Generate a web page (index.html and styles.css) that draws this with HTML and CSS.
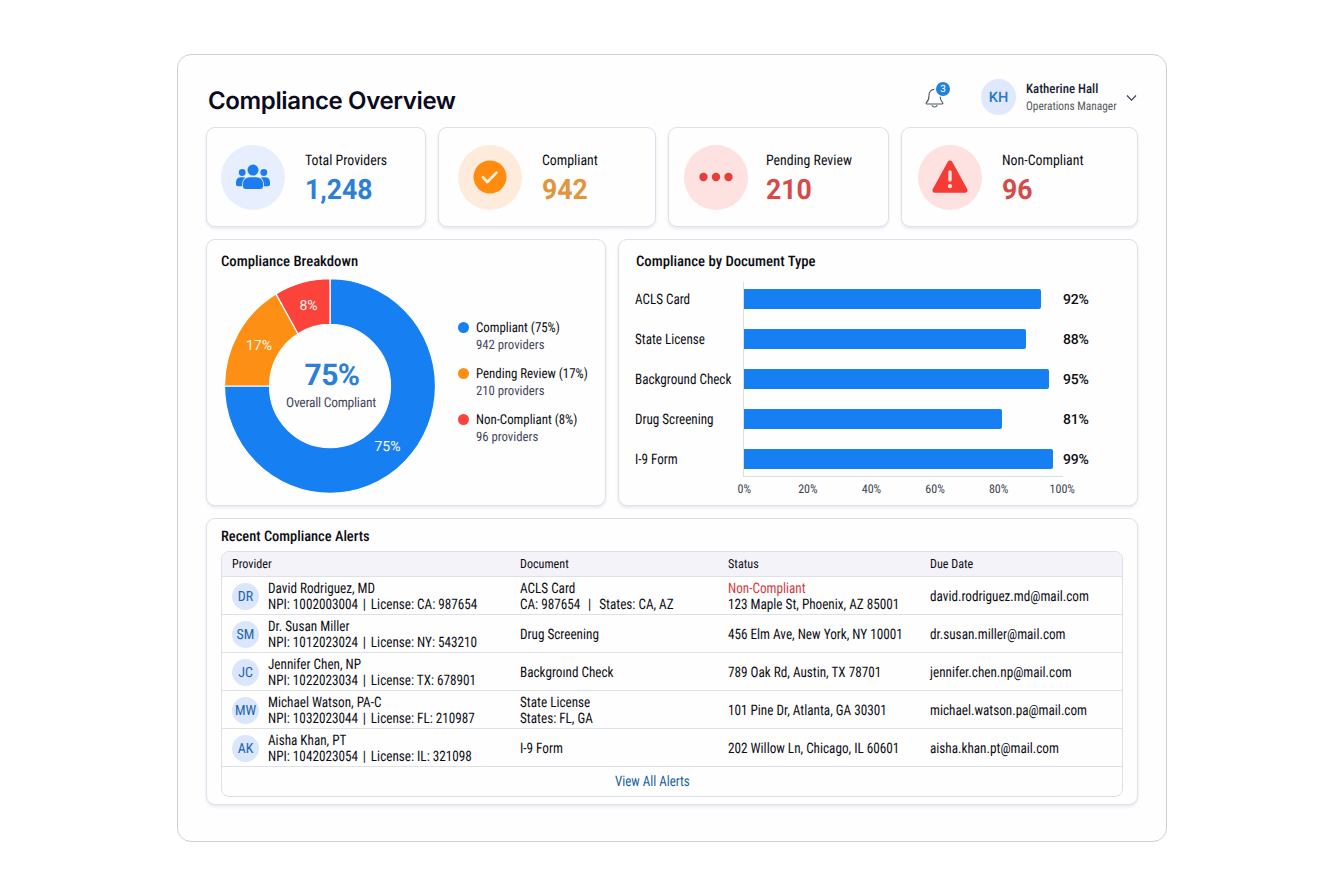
FILE: index.html
```
<!DOCTYPE html>
<html lang="en">
<head>
    <meta charset="UTF-8">
    <title>Compliance Overview</title>
    <link rel="stylesheet" href="styles.css">
</head>
<body>

<main class="window">
    <header class="topbar">
        <h1>Compliance Overview</h1>
        <div class="bell">
            <svg width="20" height="24" viewBox="0 0 20 24" fill="none" stroke="#4b5563" stroke-width="1.1" stroke-linecap="round" stroke-linejoin="round">
                <path d="M9 4.200C5.600 4.800 4 7.400 4 10.500c0 4.200-.9 5.600-2.600 7.200-.5.6-.2 1.300.5 1.300h15.200c.8 0 1.100-.8.5-1.300-1.500-1.500-2.300-3-2.400-5.700"/>
                <path d="M7 20.500c.5 1 1.300 1.500 2.500 1.500s2-.5 2.500-1.500"/>
            </svg>
            <span class="badge">3</span>
        </div>
        <div class="user-avatar">KH</div>
        <div class="user">
            <div class="user-name"><span class="t">Katherine Hall</span></div>
            <div class="user-role"><span class="t">Operations Manager</span></div>
        </div>
        <svg class="chevron" width="12" height="8" viewBox="0 0 12 8" fill="none" stroke="#374151" stroke-width="1.2"><path d="M1 1.500 5.500 6.200l4.500-4.700"/></svg>
    </header>

    <section class="stats">
        <div class="card stat">
            <div class="stat-icon blue">
                <svg width="36" height="26" viewBox="0 0 36 26" fill="#1d7cf0">
                    <circle cx="7.200" cy="8.500" r="3.400"/><circle cx="28.800" cy="8.500" r="3.400"/>
                    <path d="M3.200 22.300c-1.500 0-2.200-.8-2.200-2.200v-1.900c0-3 2-4.900 4.800-4.900h2.400c.8 0 1.400.2 2 .5-2 1.600-3 3.700-3 6.200v2.300zM32.800 22.300c1.500 0 2.200-.8 2.200-2.200v-1.900c0-3-2-4.900-4.800-4.900h-2.400c-.8 0-1.400.2-2 .5 2 1.600 3 3.700 3 6.200v2.300z"/>
                    <circle cx="18" cy="6.100" r="5.500"/>
                    <path d="M15 13.300h6c4.300 0 7 2.800 7 6.700v2.300c0 1.800-1 2.700-2.700 2.700H10.700C9 25 8 24.100 8 22.300V20c0-3.900 2.700-6.700 7-6.700z"/>
                </svg>
            </div>
            <div>
                <div class="stat-label"><span class="t">Total Providers</span></div>
                <div class="stat-value c-blue">1,248</div>
            </div>
        </div>
        <div class="card stat stat-2">
            <div class="stat-icon orange">
                <svg width="34" height="34" viewBox="0 0 34 34"><circle cx="17" cy="17" r="16.500" fill="#ff8c10"/><path d="M10 17.300l4.300 4.700 9.200-9.400" fill="none" stroke="#fff3dc" stroke-width="2.600" stroke-linecap="round" stroke-linejoin="round"/></svg>
            </div>
            <div>
                <div class="stat-label"><span class="t">Compliant</span></div>
                <div class="stat-value c-orange">942</div>
            </div>
        </div>
        <div class="card stat stat-3">
            <div class="stat-icon red">
                <svg width="36" height="10" viewBox="0 0 36 10" fill="#e53e3b"><circle cx="5.500" cy="5" r="4.200"/><circle cx="18" cy="5" r="4.200"/><circle cx="30.500" cy="5" r="4.200"/></svg>
            </div>
            <div>
                <div class="stat-label"><span class="t">Pending Review</span></div>
                <div class="stat-value c-red">210</div>
            </div>
        </div>
        <div class="card stat stat-4">
            <div class="stat-icon red">
                <svg width="36" height="34" viewBox="0 0 36 34"><path d="M18 3 33 30.300H3z" fill="#f43b35" stroke="#f43b35" stroke-width="5" stroke-linejoin="round"/><path d="M18 12v8" stroke="#ffe3e0" stroke-width="3.400" stroke-linecap="round"/><circle cx="18" cy="26.200" r="2.100" fill="#ffe3e0"/></svg>
            </div>
            <div>
                <div class="stat-label"><span class="t">Non-Compliant</span></div>
                <div class="stat-value c-red">96</div>
            </div>
        </div>
    </section>

    <section class="charts">
        <div class="card breakdown">
            <h2><span class="t">Compliance Breakdown</span></h2>
            <div class="breakdown-body">
                <svg class="donut" width="212" height="216" viewBox="0 0 212 216">
                    <g transform="translate(106 108) scale(1 1.017)" stroke="#fff" stroke-width="1.2">
                        <path fill="#1680f3" d="M0-105.500A105.500 105.500 0 1 1-105.500 0H-60.500A60.500 60.500 0 1 0 0-60.500z"/>
                        <path fill="#fc8f14" d="M-105.500 0A105.500 105.500 0 0 1-54-90.600L-32-51.400A60.500 60.500 0 0 0-60.500 0z"/>
                        <path fill="#fb433c" d="M-54-90.600A105.500 105.500 0 0 1 0-105.500V-60.500A60.500 60.500 0 0 0-32-51.400z"/>
                    </g>
                    <g class="slice-label">
                        <text x="84.500" y="31.500">8%</text>
                        <text x="35" y="71.500">17%</text>
                        <text x="163.500" y="173">75%</text>
                    </g>
                    <text class="donut-value" x="108" y="107">75%</text>
                    <text class="donut-label" x="107" y="128.500">Overall Compliant</text>
                </svg>
                <ul class="legend">
                    <li><i class="dot dot-blue"></i><div><b class="t">Compliant (75%)</b><br><span class="t">942 providers</span></div></li>
                    <li><i class="dot dot-orange"></i><div><b class="t">Pending Review (17%)</b><br><span class="t">210 providers</span></div></li>
                    <li><i class="dot dot-red"></i><div><b class="t">Non-Compliant (8%)</b><br><span class="t">96 providers</span></div></li>
                </ul>
            </div>
        </div>

        <div class="card doctype">
            <h2><span class="t">Compliance by Document Type</span></h2>
            <div class="bars">
                <div class="bar-names">
                    <span class="t">ACLS Card</span><span class="t">State License</span><span class="t">Background Check</span><span class="t">Drug Screening</span><span class="t">I-9 Form</span>
                </div>
                <div class="plot">
                    <div class="track"><div class="bar" style="width: 297px"></div></div>
                    <div class="track"><div class="bar" style="width: 282px"></div></div>
                    <div class="track"><div class="bar" style="width: 305px"></div></div>
                    <div class="track"><div class="bar" style="width: 258px"></div></div>
                    <div class="track"><div class="bar" style="width: 309px"></div></div>
                </div>
                <div class="bar-values">
                    <span>92%</span><span>88%</span><span>95%</span><span>81%</span><span>99%</span>
                </div>
            </div>
            <div class="ticks"><span>0%</span><span>20%</span><span>40%</span><span>60%</span><span>80%</span><span>100%</span></div>
        </div>
    </section>

    <section class="card alerts">
        <h2><span class="t">Recent Compliance Alerts</span></h2>
        <div class="table">
            <div class="row head">
                <div><span class="t">Provider</span></div><div><span class="t">Document</span></div><div><span class="t">Status</span></div><div><span class="t">Due Date</span></div>
            </div>
            <div class="row">
                <div class="provider"><span class="avatar">DR</span><div><span class="t">David Rodriguez, MD</span><br><span class="t">NPI: 1002003004 <i class="sep">|</i> License: CA: 987654</span></div></div>
                <div><span class="t">ACLS Card</span><br><span class="t">CA: 987654 &nbsp;<i class="sep">|</i>&nbsp; States: CA, AZ</span></div>
                <div><span class="t danger">Non-Compliant</span><br><span class="t">123 Maple St, Phoenix, AZ 85001</span></div>
                <div><span class="t">david.rodriguez.md@mail.com</span></div>
            </div>
            <div class="row">
                <div class="provider"><span class="avatar">SM</span><div><span class="t">Dr. Susan Miller</span><br><span class="t">NPI: 1012023024 <i class="sep">|</i> License: NY: 543210</span></div></div>
                <div><span class="t">Drug Screening</span></div>
                <div><span class="t">456 Elm Ave, New York, NY 10001</span></div>
                <div><span class="t">dr.susan.miller@mail.com</span></div>
            </div>
            <div class="row">
                <div class="provider"><span class="avatar">JC</span><div><span class="t">Jennifer Chen, NP</span><br><span class="t">NPI: 1022023034 <i class="sep">|</i> License: TX: 678901</span></div></div>
                <div><span class="t">Backgroınd Check</span></div>
                <div><span class="t">789 Oak Rd, Austin, TX 78701</span></div>
                <div><span class="t">jennifer.chen.np@mail.com</span></div>
            </div>
            <div class="row">
                <div class="provider"><span class="avatar">MW</span><div><span class="t">Michael Watson, PA-C</span><br><span class="t">NPI: 1032023044 <i class="sep">|</i> License: FL: 210987</span></div></div>
                <div><span class="t">State License</span><br><span class="t">States: FL, GA</span></div>
                <div><span class="t">101 Pine Dr, Atlanta, GA 30301</span></div>
                <div><span class="t">michael.watson.pa@mail.com</span></div>
            </div>
            <div class="row">
                <div class="provider"><span class="avatar">AK</span><div><span class="t">Aisha Khan, PT</span><br><span class="t">NPI: 1042023054 <i class="sep">|</i> License: IL: 321098</span></div></div>
                <div><span class="t">I-9 Form</span></div>
                <div><span class="t">202 Willow Ln, Chicago, IL 60601</span></div>
                <div><span class="t">aisha.khan.pt@mail.com</span></div>
            </div>
            <a class="view-all"><span class="t">View All Alerts</span></a>
        </div>
    </section>
</main>

</body>
</html>
```
FILE: styles.css
```
* {
    box-sizing: border-box;
}

body {
    font-family: Roboto, sans-serif;
    font-size: 14.5px;
    color: #0c0c12;
    background: #fff;
    margin: 0;
    padding: 54px 177px;
    text-rendering: geometricPrecision;
}

h1, h2, ul {
    margin: 0;
    padding: 0;
}

/* narrow text, --w sets how narrow */
.t {
    display: inline-block;
    font-stretch: 75%;
    white-space: nowrap;
    transform: scaleX(var(--w, 1));
    transform-origin: 0 50%;
}

.window {
    width: 990px;
    height: 788px;
    padding: 24px 28px 0;
    border: 1px solid #d0d1d4;
    border-radius: 14px;
    background: #fefefe;
}

.card {
    background: #fefefe;
    border: 1px solid #dfe0ea;
    border-radius: 9px;
    box-shadow: 0 2px 3px rgba(60, 60, 110, 0.1);
}

.topbar {
    display: flex;
    align-items: flex-start;
    height: 48px;
}

h1 {
    font-family: Inter, sans-serif;
    font-size: 24px;
    font-weight: 600;
    letter-spacing: -0.37px;
    line-height: 30px;
    margin: 7px auto 0 2px;
    color: #0a0a20;
}

.bell {
    position: relative;
    width: 20px;
    height: 24px;
    margin: 6px 36px 0 0;
}

.badge {
    position: absolute;
    left: 11px;
    top: -3px;
    width: 14px;
    height: 14px;
    border-radius: 50%;
    background: #2182dc;
    color: #fff;
    font-size: 10px;
    line-height: 15px;
    text-align: center;
}

.user-avatar {
    width: 35px;
    height: 36px;
    border-radius: 50%;
    background: #dfe8fc;
    color: #2a78c8;
    font-size: 14.5px;
    font-weight: 500;
    line-height: 38px;
    text-align: center;
}

.user {
    width: 100px;
    margin: 3px 0 0 10px;
}

.user-name {
    --w: 0.99;
    font-size: 13px;
    font-weight: 500;
    line-height: 16px;
    color: #1a2233;
}

.user-role {
    --w: 0.945;
    font-size: 12px;
    line-height: 16px;
    color: #55585f;
}

.chevron {
    margin: 15px 0 0 0;
}

.stats {
    display: grid;
    grid-template-columns: 220px 218px 221px 237px;
    column-gap: 12px;
    height: 100px;
}

.stat {
    display: flex;
    align-items: center;
    padding-left: 14px;
    gap: 20px;
}

.stat-2 {
    padding-left: 19px;
}

.stat-3 {
    padding-left: 15px;
    gap: 18px;
}

.stat-4 {
    padding-left: 16px;
}

.stat-icon {
    display: flex;
    align-items: center;
    justify-content: center;
    width: 64px;
    height: 65px;
    border-radius: 50%;
}

.blue {
    background: #e7eefd;
}

.orange {
    background: #feebdc;
}

.red {
    background: #fee1e1;
}

.stat-label {
    --w: 0.955;
    line-height: 20px;
    margin-top: 5px;
}

.stat-value {
    font-size: 28px;
    font-weight: 700;
    line-height: 38px;
    transform: scaleX(0.95);
    transform-origin: 0 50%;
}

.c-blue {
    color: #2c80d4;
}

.c-orange {
    color: #e2953a;
}

.c-red {
    color: #d64a4a;
}

.charts {
    display: grid;
    grid-template-columns: 400px 520px;
    column-gap: 12px;
    height: 267px;
    margin-top: 12px;
}

h2 {
    --w: 1.015;
    font-size: 14.5px;
    font-weight: 500;
    line-height: 20px;
}

.breakdown {
    padding: 12px 0 0 14px;
}

.breakdown-body {
    display: flex;
}

.donut {
    margin: 6px 0 0 3px;
    flex: none;
}

.donut text {
    text-anchor: middle;
}

.slice-label {
    fill: #fff8ee;
    font-size: 14px;
}

.donut-value {
    fill: #2c80d8;
    font-size: 30px;
    font-weight: 700;
    letter-spacing: -0.5px;
}

.donut-label {
    fill: #44465c;
    font-size: 13.5px;
    font-stretch: 75%;
    letter-spacing: -0.25px;
}

.legend {
    list-style: none;
    margin: 47px 0 0 22px;
}

.legend li {
    --w: 0.98;
    display: flex;
    gap: 7px;
    height: 46px;
    line-height: 17px;
    font-size: 13px;
    color: #44465c;
}

.legend li div {
    padding-top: 1px;
}

.legend b {
    --w: 0.94;
    font-size: 13.7px;
    font-weight: 400;
    color: #0c0c12;
}

.dot {
    width: 11px;
    height: 11px;
    margin-top: 3px;
    border-radius: 50%;
}

.dot-blue {
    background: #1680f3;
}

.dot-orange {
    background: #fc8f14;
}

.dot-red {
    background: #fb433c;
}

.doctype {
    padding: 12px 0 0 16px;
}

.doctype h2 {
    padding-left: 1px;
}

.bars {
    display: flex;
    height: 195px;
    margin-top: 10px;
}

.bar-names, .bar-values {
    display: flex;
    flex-direction: column;
    line-height: 40px;
    margin-top: -2px;
}

.bar-names {
    --w: 0.905;
    width: 108px;
}

.plot {
    width: 320px;
    border-left: 1px solid #dddee4;
    border-bottom: 1px solid #dddee4;
}

.track {
    height: 40px;
    padding-top: 7px;
}

.bar {
    height: 20px;
    border-radius: 0 2px 2px 0;
    background: #1680f3;
}

.bar-values {
    font-size: 14px;
    font-weight: 500;
    letter-spacing: -0.2px;
}

.ticks {
    display: flex;
    margin: 4px 0 0 77.5px;
    font-size: 12px;
    line-height: 16px;
    color: #3c3e50;
    font-stretch: 75%;
}

.ticks span {
    width: 63.6px;
    text-align: center;
}

.alerts {
    height: 287px;
    margin-top: 12px;
    padding: 8px 14px 0;
}

.alerts h2 {
    --w: 0.995;
}

.table {
    --w: 0.909;
    height: 246px;
    margin-top: 4px;
    border: 1px solid #dcdfe8;
    border-radius: 8px;
    overflow: hidden;
}

.row {
    display: grid;
    grid-template-columns: 287.5px 208.5px 202px 1fr;
    align-items: center;
    height: 38px;
    padding: 3px 0 0 10px;
    border-bottom: 1px solid #dfe1e8;
    line-height: 16px;
}

.head {
    --w: 0.97;
    height: 25px;
    padding-top: 1px;
    background: #f3f3f9;
    font-size: 12.5px;
}

.provider {
    display: flex;
    align-items: center;
    gap: 9px;
}

.avatar {
    width: 27px;
    height: 27px;
    margin-top: -2px;
    border-radius: 50%;
    background: #d9e6fd;
    color: #1d64a8;
    font-size: 14px;
    line-height: 28px;
    text-align: center;
    font-stretch: 75%;
}

.sep {
    font-style: normal;
    margin: 0 2px;
}

.danger {
    color: #d43c40;
}

.view-all {
    --w: 0.895;
    display: block;
    padding-left: 393px;
    line-height: 30px;
    color: #1560a0;
}
```
